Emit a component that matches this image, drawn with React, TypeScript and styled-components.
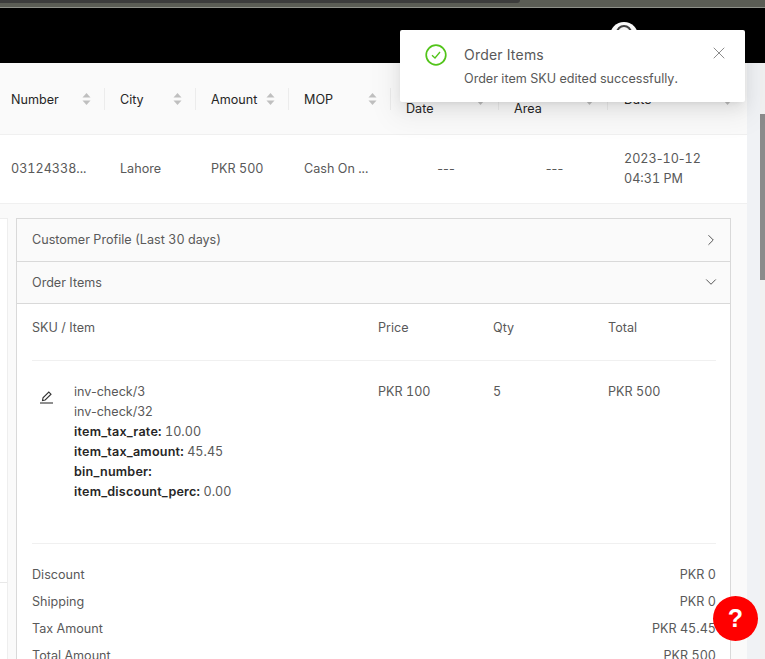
import React from "react";
import styled, { createGlobalStyle } from "styled-components";
import { ChevronRight, ChevronDown, X } from "lucide-react";

const Global = createGlobalStyle`
  html, body { margin: 0; padding: 0; height: 100%; overflow: hidden; background: #f0f2f5; }
  * { box-sizing: border-box; }
  body { font-family: Inter, "Liberation Sans", sans-serif; font-size: 12.6px; color: #595959; font-variant-numeric: tabular-nums; }
`;

const Page = styled.div`
  position: relative; width: 765px; height: 659px; overflow: hidden;
  display: flex; flex-direction: column;
`;
const Strip = styled.div`
  height: 8px; flex: none; background: #5b5d55; border-bottom: 1px solid #8f918a; position: relative;
  &::before { content: ""; position: absolute; left: 0; top: 0; width: 520px; height: 3px; background: #3c3c3c; border-radius: 0 0 4px 0; }
`;
const Header = styled.header`
  height: 55px; flex: none; background: #000; display: flex; justify-content: flex-end; padding: 14px 127px 0 0;
`;
const Avatar = styled.svg`width: 28px; height: 28px;`;
const Main = styled.div`flex: 1; display: flex; min-height: 0;`;
const Content = styled.main`width: 747px; flex: none; background: #fafafa; display: flex; flex-direction: column;`;
const Gutter = styled.div`width: 13px; flex: none; background: #f0f2f5;`;
const Scrollbar = styled.div`
  width: 5px; flex: none; background: #f1f1f1; display: flex; flex-direction: column;
  &::before { content: ""; height: 51px; background: #f1f1f1; }
  &::after { content: ""; height: 166px; background: #8b8b8b; }
`;

const Plain = styled.span`font-variant-numeric: normal;`;
const Row = styled.div<{ $head?: boolean }>`
  display: grid; grid-template-columns: 105px 91px 93px 102px 108px 109px 139px;
  height: ${p => (p.$head ? 72 : 69)}px;
  background: ${p => (p.$head ? "#fafafa" : "#fff")};
  border-bottom: 1px solid #f0f0f0;
  align-items: center;
`;
const HeadCell = styled.div<{ $first?: boolean; $last?: boolean }>`
  position: relative; height: 100%; display: flex; align-items: center; justify-content: space-between;
  padding: 1px ${p => (p.$last ? 15 : 14)}px 0 ${p => (p.$first ? 11 : p.$last ? 16 : 15)}px;
  color: #262626; line-height: 19px;
  &::after {
    content: ${p => (p.$last ? "none" : '""')}; position: absolute; right: 0; top: 50%; width: 1px; height: 22px;
    margin-top: -11px; background: #ececec;
  }
`;
const Sorter = styled.svg`width: 9px; height: 14px; flex: none; fill: #bfbfbf;`;
const Cell = styled.div<{ $first?: boolean; $last?: boolean; $center?: boolean }>`
  padding: 0 15px 1px ${p => (p.$first ? 11 : p.$last ? 16 : 15)}px;
  line-height: 20px; color: #595959;
  text-align: ${p => (p.$center ? "center" : "left")};
  white-space: nowrap; overflow: hidden; text-overflow: ellipsis;
`;
const DashCell = styled(Cell)`padding-left: 17px; padding-right: 15px;`;

const Details = styled.section`
  flex: 1; display: flex; gap: 8px; padding-top: 14px; min-height: 0;
`;
const SidePanel = styled.aside`
  width: 8px; flex: none; background: #fff; border: 1px solid #eee; border-left: 0; border-bottom: 0;
`;
const SideSection = styled.div`height: 364px; border-bottom: 1px solid #e8e8e8;`;
const Accordion = styled.div`
  width: 715px; flex: none; border: 1px solid #d9d9d9; border-bottom: 0; background: #fff; align-self: flex-start;
`;
const Panel = styled.div<{ $open?: boolean }>`
  height: ${p => (p.$open ? 42 : 43)}px; background: #fafafa; border-bottom: 1px solid #d9d9d9; display: flex; align-items: center;
  justify-content: space-between; padding: 0 10px 1px 15px; color: #595959;
`;
const PanelBody = styled.div`padding: 0 14px 0 15px; background: #fff;`;
const ItemGrid = styled.div<{ $head?: boolean }>`
  display: grid; grid-template-columns: 346px 115px 115px 1fr;
  ${p => p.$head
    ? "height: 57px; padding-top: 14px; border-bottom: 1px solid #f0f0f0;"
    : "height: 183px; padding-top: 21px; border-bottom: 1px solid #f0f0f0;"}
  line-height: 20px;
`;
const Sku = styled.div`display: flex; gap: 20px; padding-left: 7px;`;
const EditButton = styled.svg`width: 15px; height: 15px; margin-top: 8px; flex: none; color: #333;`;
const Lines = styled.div`display: flex; flex-direction: column;`;
const Strong = styled.b`font-weight: 600; color: #262626; letter-spacing: 0.2px;`;
const Totals = styled.div`padding-top: 17px;`;
const TotalRow = styled.div`
  height: 27px; display: flex; align-items: center; justify-content: space-between; color: #595959;
`;

const Toast = styled.div`
  position: absolute; left: 400px; top: 30px; width: 345px; height: 72px; background: #fff; border-radius: 2px;
  box-shadow: 0 3px 6px -4px rgba(0,0,0,.12), 0 6px 16px 0 rgba(0,0,0,.08), 0 9px 28px 8px rgba(0,0,0,.05);
  display: flex; padding: 14px 16px 0 25px;
`;
const ToastIcon = styled.svg`width: 22px; height: 22px; flex: none; margin-right: 17px;`;
const ToastText = styled.div`flex: 1;`;
const ToastTitle = styled.div`font-size: 14px; line-height: 22px; color: #595959; letter-spacing: 0.2px;`;
const ToastMsg = styled.div`line-height: 20px; margin-top: 3px; color: #595959;`;
const Close = styled.div`color: #8c8c8c; margin-top: -1px; height: 20px;`;
const Help = styled.button`
  position: absolute; left: 713px; top: 596px; width: 45px; height: 45px; border-radius: 50%; border: 0; padding: 0;
  background: #f00; color: #fff; font: 900 25px/45px "Liberation Sans", sans-serif; text-align: center;
`;

const SortIcon = () => (
  <Sorter viewBox="0 0 9 14"><path d="M4.5 1 8.5 5.5H.5z" /><path d="M4.5 13 8.5 8.5H.5z" /></Sorter>
);

const heads = ["Number", "City", "Amount", "MOP", "Delivery Date", "Delivery Area", "Date"];

export default function App() {
  return (
    <Page>
      <Global />
      <Strip />
      <Header>
        <Avatar viewBox="0 0 28 28">
          <circle cx="14" cy="14" r="14" fill="#fff" />
          <circle cx="14" cy="11" r="7" fill="none" stroke="#444" strokeWidth="2" />
        </Avatar>
      </Header>
      <Main>
        <Content>
          <Row $head>
            {heads.map((h, i) => (
              <HeadCell key={h} $first={i === 0} $last={i === 6}>
                <span>{h}</span>
                <SortIcon />
              </HeadCell>
            ))}
          </Row>
          <Row>
            <Cell $first>03124338...</Cell>
            <Cell>Lahore</Cell>
            <Cell>PKR 500</Cell>
            <Cell>Cash On ...</Cell>
            <DashCell $center><Plain>---</Plain></DashCell>
            <DashCell $center><Plain>---</Plain></DashCell>
            <Cell $last>2023<Plain>-</Plain>10<Plain>-</Plain>12<br />04:31 PM</Cell>
          </Row>
          <Details>
            <SidePanel><SideSection /></SidePanel>
            <Accordion>
              <Panel>
                <span>Customer Profile (Last 30 days)</span>
                <ChevronRight size={18} strokeWidth={1.1} color="#333" />
              </Panel>
              <Panel $open>
                <span>Order Items</span>
                <ChevronDown size={18} strokeWidth={1.1} color="#333" />
              </Panel>
              <PanelBody>
                <ItemGrid $head>
                  <div>SKU / Item</div><div>Price</div><div>Qty</div><div>Total</div>
                </ItemGrid>
                <ItemGrid>
                  <Sku>
                    <EditButton viewBox="0 0 15 15" fill="none" stroke="currentColor" strokeWidth="1.1">
                      <path d="M3.5 10.5 4 7.8 9.8 2 12 4.2 6.2 10 3.5 10.5Z" />
                      <path d="M1 13h13" />
                    </EditButton>
                    <Lines>
                      <Plain>inv-check/3</Plain>
                      <Plain>inv-check/32</Plain>
                      <span><Strong>item_tax_rate:</Strong> 10.00</span>
                      <span><Strong>item_tax_amount:</Strong> 45.45</span>
                      <span><Strong>bin_number:</Strong></span>
                      <span><Strong>item_discount_perc:</Strong> 0.00</span>
                    </Lines>
                  </Sku>
                  <div>PKR 100</div><div>5</div><div>PKR 500</div>
                </ItemGrid>
                <Totals>
                  <TotalRow><span>Discount</span><span>PKR 0</span></TotalRow>
                  <TotalRow><span>Shipping</span><span>PKR 0</span></TotalRow>
                  <TotalRow><span>Tax Amount</span><span>PKR 45.45</span></TotalRow>
                  <TotalRow><span>Total Amount</span><span>PKR 500</span></TotalRow>
                </Totals>
              </PanelBody>
            </Accordion>
          </Details>
        </Content>
        <Gutter />
        <Scrollbar />
      </Main>
      <Toast>
        <ToastIcon viewBox="0 0 22 22" fill="none" stroke="#52c41a">
          <circle cx="11" cy="11" r="9.8" strokeWidth="1.7" />
          <path d="M7 11.2 10 14 15 8" strokeWidth="1.3" />
        </ToastIcon>
        <ToastText>
          <ToastTitle>Order Items</ToastTitle>
          <ToastMsg>Order item SKU edited successfully.</ToastMsg>
        </ToastText>
        <Close><X size={20} strokeWidth={1.2} /></Close>
      </Toast>
      <Help>?</Help>
    </Page>
  );
}
